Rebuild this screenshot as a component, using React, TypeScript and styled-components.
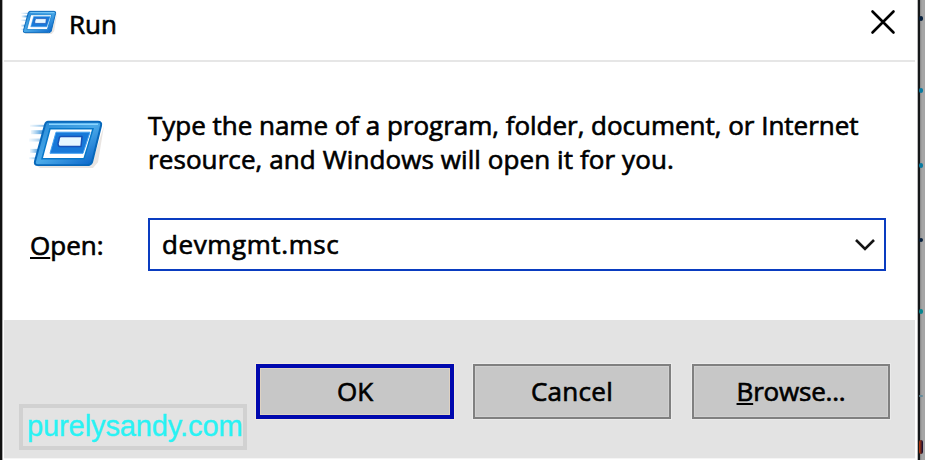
import React from "react";
import styled, { createGlobalStyle } from "styled-components";

const GlobalStyle = createGlobalStyle`
  *, *::before, *::after { box-sizing: border-box; }
  html, body { margin: 0; padding: 0; }
  body { width: 925px; height: 460px; overflow: hidden; }
`;

const Desktop = styled.div`
  display: grid;
  grid-template-columns: 2px 916px 7px;
  width: 925px;
  height: 460px;
  overflow: hidden;
  background: #111;
  font-family: "Open Sans", "Noto Sans", sans-serif;
  font-size: 26px;
  font-weight: 500;
  color: #000;
`;

const Dialog = styled.main`
  grid-column: 2;
  display: flex;
  flex-direction: column;
  width: 916px;
  height: 460px;
  background: #fff;
  border-left: 1px solid #aaa;
  border-right: 1px solid #bbb;
`;

const Backdrop = styled.aside`
  position: relative;
  border-left: 2px solid #151719;
  background: linear-gradient(90deg, #858585, #a6a6a6 40%);
`;

const Fleck = styled.i<{ $top: number; $h: number; $color: string }>`
  position: absolute;
  left: -1px;
  top: ${(p) => p.$top}px;
  width: 4px;
  height: ${(p) => p.$h}px;
  border-radius: 2px;
  background: ${(p) => p.$color};
`;

const TitleBar = styled.header`
  display: flex;
  align-items: flex-start;
  flex: none;
  height: 62px;
  margin: 0 2px 0 1px;
  padding-left: 17px;
  border-bottom: 2px solid #e6e6e6;
`;

const TitleIcon = styled.div`
  width: 40px;
  height: 29px;
  margin: 7px 0 0 -1px;
`;

const Label = styled.span<{ $spacing?: number }>`
  display: inline-block;
  white-space: pre;
  line-height: 34px;
  letter-spacing: ${(p) => p.$spacing ?? 0}px;
  -webkit-text-stroke: 0.65px #000;
`;

const Title = styled.h1`
  flex: 1;
  margin: 6px 0 0 9px;
  font: inherit;
`;

const CloseButton = styled.button`
  width: 26px;
  height: 26px;
  margin: 9px 19px 0 0;
  padding: 0;
  border: 0;
  background: none;
`;

const Body = styled.section`
  flex: none;
  height: 258px;
  padding: 46px 30px 0 27px;
`;

const Message = styled.div`
  display: grid;
  grid-template-columns: 118px 1fr;
  height: 110px;
`;

const RunIcon = styled.div`
  width: 82px;
  height: 59px;
  margin: 5px 0 0 -2px;
`;

const Copy = styled.div`
  display: flex;
  flex-direction: column;
`;

const OpenRow = styled.div`
  display: grid;
  grid-template-columns: 118px 738px;
  height: 53px;
  align-items: center;
`;

const Combo = styled.div`
  display: flex;
  align-items: center;
  justify-content: space-between;
  height: 53px;
  padding: 0 8px 2px 12px;
  border: 2px solid #0a3cc0;
  background: #fff;
`;

const Footer = styled.footer`
  display: flex;
  align-items: flex-start;
  flex: none;
  height: 139px;
  margin: 0 2px 0 1px;
  padding: 44px 0 0 15px;
  background: #e3e3e3;
  border-bottom: 1px solid #f5f5f5;
`;

const Watermark = styled.div`
  display: flex;
  align-items: center;
  width: 228px;
  height: 46px;
  margin: 40px 9px 0 0;
  padding: 0 0 2px 4px;
  border: 4px solid #d1d1d1;
  color: #28f3f5;
  font: 400 29px "Liberation Sans", Arial, sans-serif;
  letter-spacing: -0.1px;
  -webkit-text-stroke: 0.4px #28f3f5;
  text-shadow: 0 0 1px #ffd2d2;
`;

const Actions = styled.div`
  display: flex;
`;

const PushButton = styled.button<{ $primary?: boolean; $gap?: number }>`
  width: 198px;
  height: 55px;
  margin-left: ${(p) => p.$gap ?? 0}px;
  padding: 0 0 2px;
  border: ${(p) => (p.$primary ? "4px solid #0008ae" : "2px solid #808080")};
  background: #c7c7c7;
  box-shadow: 0 0 0 1px ${(p) => (p.$primary ? "#f1e8df" : "#ebebeb")},
    inset 0 0 0 1px ${(p) => (p.$primary ? "#ded2c2" : "#d0d0d0")};
  font: inherit;
  color: inherit;
`;

const Mnemonic = styled.span`
  text-decoration: underline;
  text-decoration-thickness: 2px;
  text-underline-offset: 2px;
`;

function RunGlyph({ id }: { id: string }) {
  return (
    <svg width="100%" height="100%" viewBox="0 0 82 60" preserveAspectRatio="none">
      <defs>
        <linearGradient id={id} x1="0" y1="0" x2="1" y2="1">
          <stop offset="0" stopColor="#2487d5" />
          <stop offset=".5" stopColor="#4aa9e8" />
          <stop offset="1" stopColor="#005bc5" />
        </linearGradient>
        <linearGradient id={`${id}-speed`}>
          <stop offset="0" stopColor="#3b99dd" stopOpacity=".1" />
          <stop offset="1" stopColor="#1478cf" />
        </linearGradient>
      </defs>
      <path d="M9 54H63L76 13L70 50L65 56H12Z" fill="#c8bdb6" opacity=".4" />
      <g fill={`url(#${id}-speed)`}>
        <rect x="2" y="12" width="18" height="2" opacity=".65" />
        <rect x="3" y="17.500" width="15" height="4" />
        <rect x="1" y="26" width="15" height="3" opacity=".5" />
        <rect x="2" y="36.500" width="12" height="4" />
        <rect x="1" y="45" width="10" height="2" opacity=".6" />
      </g>
      <path d="M20 9H70Q74 9 73 13L64 50Q63 53 59 53H10Q6 53 7 49L17 12Q18 9 20 9Z" fill={`url(#${id})`} stroke="#0868ba" strokeWidth="2" />
      <path d="M21 11.500H70" stroke="#8bd5ff" strokeWidth="1.500" />
      <path d="M22 16H65L56 46.500H14Z" fill="#fff" stroke="#0878c9" strokeWidth="1.500" />
      <path d="M28 19.500H62L55 41H22Z" fill="#1779d9" stroke="#41a0ef" strokeWidth="1" />
      <path d="M33 24H54L53 34H32Q30 34 30 31L31 27Q31 24 33 24Z" fill="#e6f7ff" stroke="#1652b8" strokeWidth="1.500" strokeLinejoin="round" />
    </svg>
  );
}

const flecks = [
  { top: 16, h: 5, color: "#07203d" },
  { top: 88, h: 5, color: "#087aa0" },
  { top: 163, h: 5, color: "#087aa0" },
  { top: 238, h: 4, color: "#07203d" },
  { top: 309, h: 5, color: "#07858f" },
  { top: 395, h: 2, color: "#638b9b" },
];

export default function App() {
  return (
    <>
      <GlobalStyle />
      <Desktop>
        <Dialog>
          <TitleBar>
            <TitleIcon><RunGlyph id="small" /></TitleIcon>
            <Title><Label>Run</Label></Title>
            <CloseButton aria-label="Close">
              <svg width="26" height="26" viewBox="0 0 26 26" fill="none" stroke="#000" strokeWidth="2.600" strokeLinecap="round">
                <path d="M2.500 2.500L23.500 23.500M23.500 2.500L2.500 23.500" />
              </svg>
            </CloseButton>
          </TitleBar>
          <Body>
            <Message>
              <RunIcon><RunGlyph id="large" /></RunIcon>
              <Copy>
                <Label $spacing={-0.02}>Type the name of a program, folder, document, or Internet</Label>
                <Label $spacing={0.09}>resource, and Windows will open it for you.</Label>
              </Copy>
            </Message>
            <OpenRow>
              <Label><Mnemonic>O</Mnemonic>pen:</Label>
              <Combo>
                <Label $spacing={0.6}>devmgmt.msc</Label>
                <svg width="22" height="16" viewBox="0 0 22 16" fill="none" stroke="#151515" strokeWidth="2.600">
                  <path d="M2 4L11 13L20 4" />
                </svg>
              </Combo>
            </OpenRow>
          </Body>
          <Footer>
            <Watermark>purelysandy.com</Watermark>
            <Actions>
              <PushButton $primary><Label>OK</Label></PushButton>
              <PushButton $gap={19}><Label $spacing={0.3}>Cancel</Label></PushButton>
              <PushButton $gap={21}><Label $spacing={-0.2}><Mnemonic>B</Mnemonic>rowse...</Label></PushButton>
            </Actions>
          </Footer>
        </Dialog>
        <Backdrop>
          {flecks.map((f) => <Fleck key={f.top} $top={f.top} $h={f.h} $color={f.color} />)}
          <Fleck $top={440} $h={14} $color="linear-gradient(90deg, #c33b08, #080c35)" />
        </Backdrop>
      </Desktop>
    </>
  );
}
